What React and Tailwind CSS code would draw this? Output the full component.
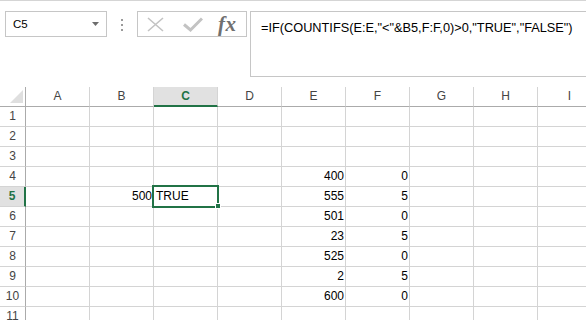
import React from 'react';

const cols = ['A', 'B', 'C', 'D', 'E', 'F', 'G', 'H', 'I'];

// cell values by row, keyed on column letter
const data = {
  4: { E: '400', F: '0' },
  5: { B: '500', C: 'TRUE', E: '555', F: '5' },
  6: { E: '501', F: '0' },
  7: { E: '23', F: '5' },
  8: { E: '525', F: '0' },
  9: { E: '2', F: '5' },
  10: { E: '600', F: '0' },
};

const rows = [1, 2, 3, 4, 5, 6, 7, 8, 9, 10, 11];

const FormulaBar = () => (
  <div className="h-[87px] border-t border-[#d5d5d5] flex items-start pt-[10px] shrink-0">
    {/* Name box */}
    <div className="ml-[5px] w-[102px] h-[26px] shrink-0 border border-[#c6c6c6] flex items-center justify-between pl-[7px] pr-[7px]">
      <span className="text-[11.5px] leading-[16px] text-black">C5</span>
      <svg width="7" height="4" viewBox="0 0 7 4">
        <path d="M0 0 H7 L3.5 4 Z" fill="#6d6d6d" />
      </svg>
    </div>

    {/* Grip dots */}
    <div className="ml-[14px] mt-[8px] flex flex-col gap-[3px] shrink-0">
      <div className="w-[2px] h-[2px] bg-[#9a9a9a]" />
      <div className="w-[2px] h-[2px] bg-[#9a9a9a]" />
      <div className="w-[2px] h-[2px] bg-[#9a9a9a]" />
    </div>

    {/* Cancel / Enter / Insert function */}
    <div className="ml-[14px] w-[110px] h-[26px] shrink-0 border border-[#c6c6c6] flex items-center pl-[9px]">
      <svg width="17" height="15" viewBox="0 0 17 15">
        <path d="M1 1 L16 14 M16 1 L1 14" stroke="#c3c3c3" strokeWidth="1.6" fill="none" />
      </svg>
      <svg className="ml-[19px]" width="20" height="15" viewBox="0 0 20 15">
        <path d="M1 7.5 L7.5 13 L19 1.5" stroke="#c3c3c3" strokeWidth="3" fill="none" />
      </svg>
      <span className="ml-[15px] font-['Liberation_Serif',serif] italic font-bold text-[21px] leading-[20px] text-[#707070] tracking-[0.5px]">
        fx
      </span>
    </div>

    {/* Formula input */}
    <div className="ml-[3px] w-[400px] h-[66px] shrink-0 border border-[#c6c6c6] pl-[10px] pt-[8px]">
      <p className="text-[12.75px] leading-[16px] text-black whitespace-nowrap">
        =IF(COUNTIFS(E:E,"&lt;"&amp;B5,F:F,0)&gt;0,"TRUE","FALSE")
      </p>
    </div>
  </div>
);

const Sheet = () => (
  <div className="grid grid-cols-[26px_repeat(9,64px)] auto-rows-[20px] text-[12px] leading-[19px]">
    {/* header row */}
    <div className="relative border-r border-b border-[#ababab]">
      <svg className="absolute left-[10px] top-[3px]" width="13" height="13" viewBox="0 0 13 13">
        <path d="M13 0 V13 H0 Z" fill="#dfdfdf" />
      </svg>
    </div>
    {cols.map((c) =>
      c === 'C' ? (
        <div
          key={c}
          className="bg-[#e1e1e1] border-r border-r-[#d4d4d4] border-b-2 border-b-[#217346] text-center font-bold text-[#217346]"
        >
          {c}
        </div>
      ) : (
        <div
          key={c}
          className="border-r border-r-[#d4d4d4] border-b border-b-[#ababab] text-center text-[#444]"
        >
          {c}
        </div>
      )
    )}

    {rows.map((r) => (
      <React.Fragment key={r}>
        {r === 5 ? (
          <div className="bg-[#e1e1e1] border-b border-b-[#d4d4d4] border-r-2 border-r-[#217346] text-center font-bold text-[#217346]">
            {r}
          </div>
        ) : (
          <div className="border-b border-b-[#d4d4d4] border-r border-r-[#ababab] text-center text-[#444]">
            {r}
          </div>
        )}
        {cols.map((c) => {
          const v = data[r]?.[c];
          const isText = v === 'TRUE';
          return (
            <div
              key={c}
              className={`border-r border-b border-[#d4d4d4] text-black whitespace-nowrap ${isText ? 'text-left pl-[2px]' : 'text-right pr-[1px]'}`}
            >
              {v}
            </div>
          );
        })}
      </React.Fragment>
    ))}
  </div>
);

export default function App() {
  return (
    <div className="relative w-[586px] h-[320px] overflow-hidden bg-white font-['Liberation_Sans',Arial,sans-serif]">
      <FormulaBar />
      <Sheet />

      {/* active cell outline + fill handle */}
      <div className="absolute left-[152px] top-[185px] w-[67px] h-[23px] border-2 border-[#217346]" />
      <div className="absolute left-[215px] top-[203px] w-[6px] h-[6px] bg-[#217346] border border-white" />
    </div>
  );
}
